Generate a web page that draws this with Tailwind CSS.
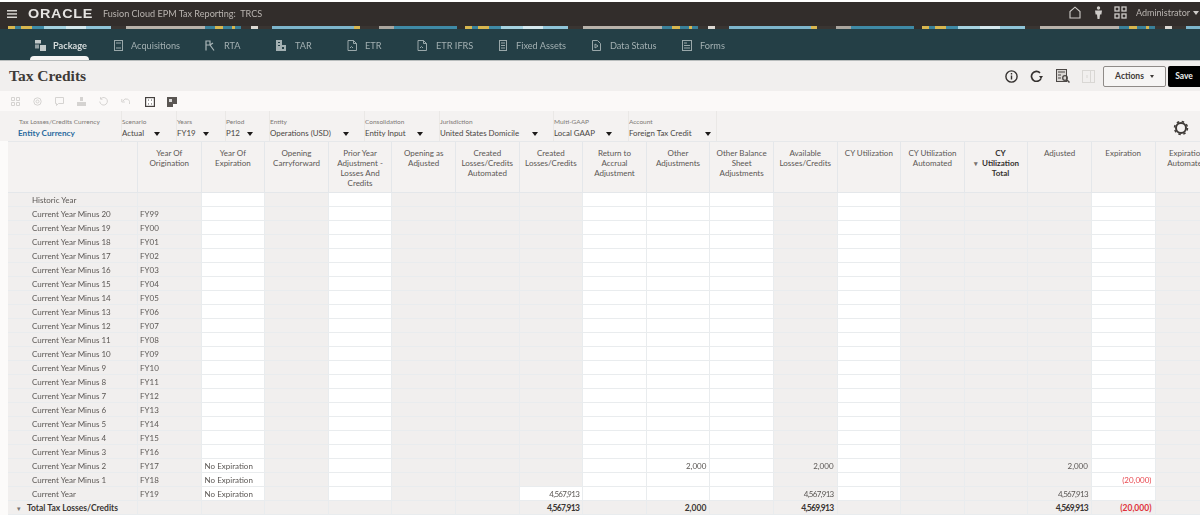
<!DOCTYPE html>
<html lang="en">
<head>
    <meta charset="UTF-8">
    <meta name="viewport" content="width=device-width, initial-scale=1.0">
    <title>Tax Credits</title>
    <script src="https://cdn.jsdelivr.net/npm/@tailwindcss/browser@4"></script>
</head>
<body class="bg-white overflow-hidden">
<div class="w-[1200px] h-[521px] overflow-hidden blur-[0.5px] font-['Lato','Open_Sans',sans-serif] text-[9px] text-[#55504d]">

    <!-- top bar -->
    <div class="h-[2px] bg-white"></div>
    <header class="h-[24px] bg-[#322d2b] flex items-center text-[#b9b4b0]">
        <svg class="ml-[7px] w-[10px] h-[8px]" viewBox="0 0 10 8" fill="#d8d5d2"><rect width="10" height="1.5"/><rect y="3.2" width="10" height="1.5"/><rect y="6.5" width="10" height="1.5"/></svg>
        <span class="ml-[11px] w-[75px] font-['Liberation_Sans',sans-serif] font-bold text-[12px] tracking-[0.6px] text-[#e6e4e2] scale-x-[1.2] origin-left">ORACLE</span>
        <span class="text-[9.1px] w-[960px]">Fusion Cloud EPM Tax Reporting:&nbsp; TRCS</span>
        <div class="absolute left-[1068px] top-[6px] flex items-center">
            <svg class="w-[14px] h-[13px]" viewBox="0 0 14 13" fill="none" stroke="#cfccc9" stroke-width="1.1"><path d="M2 12V5.5L7 1.2l5 4.3V12z"/></svg>
            <svg class="ml-[12px] w-[9px] h-[13px]" viewBox="0 0 9 13" fill="#cfccc9"><circle cx="4.5" cy="2" r="1.7"/><path d="M1 4.5h7l-.6 4H6L5.5 13h-2L3 8.5H1.6z"/></svg>
            <svg class="ml-[11px] w-[13px] h-[13px]" viewBox="0 0 13 13" fill="none" stroke="#cfccc9" stroke-width="1.3"><rect x="1" y="1" width="4" height="4"/><rect x="8" y="1" width="4" height="4"/><rect x="1" y="8" width="4" height="4"/><rect x="8" y="8" width="4" height="4"/></svg>
            <span class="ml-[9px] text-[9px] whitespace-nowrap">Administrator</span>
            <span class="ml-[3px] w-0 h-0 border-x-[3.5px] border-x-transparent border-t-[4px] border-t-[#cfccc9]"></span>
        </div>
    </header>
    <div id="strip" class="h-[3px] flex bg-[#322d2b] overflow-hidden"></div>

    <!-- package tabs -->
    <nav class="h-[31px] bg-[#243f46] flex items-center pl-[35px] pt-[2px] text-[9.2px] text-[#a3b0b2] relative">
        <div class="w-[79px] flex items-center gap-[7px] text-[#d5dbdb] font-bold">
            <svg class="w-[11px] h-[11px]" viewBox="0 0 11 11" fill="#c3caca"><rect width="6" height="3.5"/><rect y="4.5" width="4" height="4" opacity=".7"/><rect x="5" y="5" width="6" height="6"/></svg>
            <span>Package</span>
        </div>
        <div class="w-[91px] flex items-center gap-[8px]">
            <svg class="w-[9px] h-[11px]" viewBox="0 0 9 11" fill="none" stroke="#9aa8aa"><rect x=".5" y=".5" width="8" height="10"/><path d="M2 3h5M2 8h5"/></svg>
            <span>Acquisitions</span>
        </div>
        <div class="w-[71px] flex items-center gap-[9px]">
            <svg class="w-[10px] h-[11px]" viewBox="0 0 10 11" fill="none" stroke="#aab6b8" stroke-width="1.2"><path d="M1 .5v10M1 5h4l4 5.5M1 1h4v4M5 5l3-2"/></svg>
            <span>RTA</span>
        </div>
        <div class="w-[71px] flex items-center gap-[9px]">
            <svg class="w-[10px] h-[11px]" viewBox="0 0 10 11" fill="#a3b0b2"><path d="M0 0h6v5h4v6H0z"/><path d="M2 2h2v1H2zM2 5h2v1H2zM6 7h2v2H6z" fill="#243f46"/></svg>
            <span>TAR</span>
        </div>
        <div class="w-[70px] flex items-center gap-[8px]">
            <svg class="w-[10px] h-[11px]" viewBox="0 0 10 11" fill="none" stroke="#9aa8aa"><path d="M1 .5h5.5l3 3v7h-8.500zM6.500 .5v3h3M3 8l1.500-1.500L6 8"/></svg>
            <span>ETR</span>
        </div>
        <div class="w-[82px] flex items-center gap-[9px]">
            <svg class="w-[10px] h-[11px]" viewBox="0 0 10 11" fill="none" stroke="#9aa8aa"><path d="M1 .5h5.500l3 3v7h-8.500zM6.500 .5v3h3M3 8l1.500-1.500L6 8"/></svg>
            <span>ETR IFRS</span>
        </div>
        <div class="w-[93px] flex items-center gap-[9px]">
            <svg class="w-[8px] h-[11px]" viewBox="0 0 8 11" fill="none" stroke="#9aa8aa"><rect x=".5" y=".5" width="7" height="10"/><path d="M2 3h4M2 5.500h4M2 8h4"/></svg>
            <span>Fixed Assets</span>
        </div>
        <div class="w-[90px] flex items-center gap-[9px]">
            <svg class="w-[9px] h-[11px]" viewBox="0 0 9 11" fill="none" stroke="#9aa8aa"><path d="M.5 .5h5l3 3v7h-8zM3 4v4l3-2z"/></svg>
            <span>Data Status</span>
        </div>
        <div class="flex items-center gap-[8px]">
            <svg class="w-[10px] h-[11px]" viewBox="0 0 10 11" fill="none" stroke="#9aa8aa"><rect x=".5" y=".5" width="9" height="10"/><path d="M2 3h3M2 5.500h6M2 8h6"/></svg>
            <span>Forms</span>
        </div>
        <div class="absolute left-[30px] bottom-0 w-[59px] h-[4px] bg-[#f6f5f4] rounded-t-[4px]"></div>
    </nav>

    <!-- title row -->
    <div class="h-[31px] bg-[#f1efee] border-t border-[#b9bdbd] flex items-center pl-[9px] relative">
        <h1 class="font-['Liberation_Serif',serif] font-bold text-[15.5px] text-[#3e3a37]">Tax Credits</h1>
        <div class="ml-auto flex items-center">
            <svg class="w-[13px] h-[13px]" viewBox="0 0 13 13" fill="none" stroke="#35312f" stroke-width="1.4"><circle cx="6.500" cy="6.500" r="5.600"/><path d="M6.500 5.500v4M6.500 3v1.400"/></svg>
            <svg class="ml-[12px] w-[13px] h-[12px]" viewBox="0 0 13 12" fill="none" stroke="#35312f" stroke-width="1.700"><path d="M11 8.500A5 5 0 1 1 10 2.800"/><path d="M9 6h4l-2 3z" fill="#35312f" stroke="none"/></svg>
            <svg class="ml-[13px] w-[14px] h-[14px]" viewBox="0 0 14 14" fill="none" stroke="#4b4745"><rect x=".5" y=".5" width="10" height="12" fill="#d9d6d3"/><path d="M2 3h7M2 6h3M2 9h3"/><circle cx="9" cy="9" r="2.300" stroke-width="1.300"/><path d="M11 11l2.500 2.500" stroke-width="1.500"/></svg>
            <svg class="ml-[12px] w-[13px] h-[13px]" viewBox="0 0 13 13" fill="none" stroke="#d9d7d4"><rect x=".5" y=".5" width="12" height="12"/><path d="M8.500 .5v12M5 5v3"/></svg>
            <div class="ml-[8px] w-[63px] h-[21px] border border-[#8f8b88] rounded-[2px] bg-[#f6f5f4] flex items-center justify-center gap-[6px] text-[8.500px] font-bold text-[#3e3a37]">
                Actions
                <span class="w-0 h-0 border-x-[2.500px] border-x-transparent border-t-[3px] border-t-[#3e3a37]"></span>
            </div>
            <div class="ml-[2px] w-[32px] h-[21px] bg-black rounded-l-[2px] flex items-center justify-center text-[8.500px] font-bold text-[#eeeeee]">Save</div>
        </div>
    </div>

    <!-- icon toolbar -->
    <div class="h-[20px] bg-[#fbf9f8] flex items-center pl-[11px] pt-px gap-[13px]">
        <svg class="w-[9px] h-[9px]" viewBox="0 0 9 9" fill="none" stroke="#d5d3d1"><path d="M.5 .5h3v3h-3zM5.500 .5h3v3h-3zM.5 5.500h3v3h-3zM5.500 5.500h3v3h-3z"/></svg>
        <svg class="w-[9px] h-[9px]" viewBox="0 0 9 9" fill="none" stroke="#d5d3d1"><circle cx="4.500" cy="4.500" r="3.700"/><circle cx="4.500" cy="4.500" r="1.500"/></svg>
        <svg class="w-[9px] h-[9px]" viewBox="0 0 9 9" fill="none" stroke="#d5d3d1"><path d="M.5 .5h8v6h-5l-2 2v-2h-1z"/></svg>
        <svg class="w-[9px] h-[9px]" viewBox="0 0 9 9" fill="#d5d3d1"><rect x="3" width="3" height="4"/><rect y="5" width="9" height="4"/></svg>
        <svg class="w-[9px] h-[9px]" viewBox="0 0 9 9" fill="none" stroke="#d5d3d1"><path d="M2 1.500A3.800 3.800 0 1 1 .8 4.500M1.500 .2v2h2"/></svg>
        <svg class="w-[9px] h-[9px]" viewBox="0 0 9 9" fill="none" stroke="#d5d3d1"><path d="M8.500 7A3.500 3.500 0 0 0 2 4M.8 2v3h3"/></svg>
        <svg class="ml-[2px] w-[10px] h-[10px]" viewBox="0 0 10 10" fill="#fff" stroke="#45413f" stroke-width="1.200"><rect x=".6" y=".6" width="8.800" height="8.800"/><path d="M3.200 3.200h.5M6.300 3.200h.5M3.200 6.800h.5M6.300 6.800h.5" stroke-width="1.800"/></svg>
        <svg class="ml-[-1px] w-[10px] h-[10px]" viewBox="0 0 10 10" fill="#5a5653"><path d="M0 0h10v7H6v3H0z"/><path d="M2 2h3v3H2z" fill="#ddd"/></svg>
    </div>

    <!-- point of view bar -->
    <div class="h-[30px] bg-[#f4f2f1] flex items-center pl-[18px] relative text-[7.900px] text-[#4a4643] whitespace-nowrap">
        <div class="w-[104px] border-r border-[#eae8e6] h-full pt-[7px]">
            <div class="text-[6.500px] leading-[8px] text-[#7c7875] pl-px">Tax Losses/Credits Currency</div>
            <div class="leading-[14px] font-bold text-[#2a6a9e] text-[8.200px]">Entity Currency</div>
        </div>
        <div class="w-[55px] border-r border-[#eae8e6] h-full pt-[7px]">
            <div class="text-[6.500px] leading-[8px] text-[#7c7875]">Scenario</div>
            <div class="w-[38px] leading-[14px] flex items-center justify-between">Actual<span class="w-0 h-0 border-x-[3.500px] border-x-transparent border-t-[4px] border-t-[#1c1a19] translate-y-px"></span></div>
        </div>
        <div class="w-[49px] border-r border-[#eae8e6] h-full pt-[7px]">
            <div class="text-[6.500px] leading-[8px] text-[#7c7875]">Years</div>
            <div class="w-[32px] leading-[14px] flex items-center justify-between">FY19<span class="w-0 h-0 border-x-[3.500px] border-x-transparent border-t-[4px] border-t-[#1c1a19] translate-y-px"></span></div>
        </div>
        <div class="w-[44px] border-r border-[#eae8e6] h-full pt-[7px]">
            <div class="text-[6.500px] leading-[8px] text-[#7c7875]">Period</div>
            <div class="w-[27px] leading-[14px] flex items-center justify-between">P12<span class="w-0 h-0 border-x-[3.500px] border-x-transparent border-t-[4px] border-t-[#1c1a19] translate-y-px"></span></div>
        </div>
        <div class="w-[95px] border-r border-[#eae8e6] h-full pt-[7px]">
            <div class="text-[6.500px] leading-[8px] text-[#7c7875]">Entity</div>
            <div class="w-[79px] leading-[14px] flex items-center justify-between">Operations (USD)<span class="w-0 h-0 border-x-[3.500px] border-x-transparent border-t-[4px] border-t-[#1c1a19] translate-y-px"></span></div>
        </div>
        <div class="w-[75px] border-r border-[#eae8e6] h-full pt-[7px]">
            <div class="text-[6.500px] leading-[8px] text-[#7c7875]">Consolidation</div>
            <div class="w-[58px] leading-[14px] flex items-center justify-between">Entity Input<span class="w-0 h-0 border-x-[3.500px] border-x-transparent border-t-[4px] border-t-[#1c1a19] translate-y-px"></span></div>
        </div>
        <div class="w-[114px] border-r border-[#eae8e6] h-full pt-[7px]">
            <div class="text-[6.500px] leading-[8px] text-[#7c7875]">Jurisdiction</div>
            <div class="w-[98px] leading-[14px] flex items-center justify-between">United States Domicile<span class="w-0 h-0 border-x-[3.500px] border-x-transparent border-t-[4px] border-t-[#1c1a19] translate-y-px"></span></div>
        </div>
        <div class="w-[75px] border-r border-[#eae8e6] h-full pt-[7px]">
            <div class="text-[6.500px] leading-[8px] text-[#7c7875]">Multi-GAAP</div>
            <div class="w-[58px] leading-[14px] flex items-center justify-between">Local GAAP<span class="w-0 h-0 border-x-[3.500px] border-x-transparent border-t-[4px] border-t-[#1c1a19] translate-y-px"></span></div>
        </div>
        <div class="w-[88px] border-r border-[#eae8e6] h-full pt-[7px]">
            <div class="text-[6.500px] leading-[8px] text-[#7c7875]">Account</div>
            <div class="w-[82px] leading-[14px] flex items-center justify-between">Foreign Tax Credit<span class="w-0 h-0 border-x-[3.500px] border-x-transparent border-t-[4px] border-t-[#1c1a19] translate-y-px"></span></div>
        </div>
        <svg class="ml-auto mr-[11px] translate-y-[2px] w-[16px] h-[16px]" viewBox="0 0 16 16" fill="none" stroke="#3e3a37"><circle cx="8" cy="8" r="5" stroke-width="2"/><circle cx="8" cy="8" r="6.500" stroke-width="1.500" stroke-dasharray="2.500 2.600"/></svg>
    </div>

    <!-- data grid -->
    <div class="pl-[8px] bg-[#fcfbfa] h-[374px]">
        <div id="grid" class="grid grid-cols-[130px_repeat(17,63.6px)] w-[1211px] border-t border-[#e6e8ea]"></div>
    </div>
</div>

<script>
    // decorative strip under the top bar, one period of 457px
    const stripColors = [
        ['#322d2b', 8], ['#d8b64f', 7], ['#3a8099', 6], ['#d8b64f', 11], ['#3f8aa6', 12], ['#a5d2e0', 22], ['#d5e8ee', 20], ['#8fc4d8', 25],
        ['#3a3532', 15], ['#b8b2aa', 79], ['#3a8099', 10], ['#d8b64f', 8], ['#3a8099', 9], ['#d8b64f', 3], ['#3a8099', 6],
        ['#3a3532', 10], ['#dcd8d2', 7], ['#3a3532', 14], ['#7db5cc', 82], ['#d8b64f', 6], ['#3a3532', 19], ['#aaa59e', 15], ['#3f8aa6', 63]
    ];
    const strip = document.getElementById('strip');
    for (let i = 0; i < 3; i++) {
        stripColors.forEach(([color, width]) => {
            const seg = document.createElement('span');
            seg.className = 'shrink-0 h-full';
            seg.style.width = width + 'px';
            seg.style.backgroundColor = color;
            strip.appendChild(seg);
        });
    }

    const headers = ['', 'Year Of Origination', 'Year Of Expiration', 'Opening Carryforward', 'Prior Year Adjustment - Losses And Credits',
        'Opening as Adjusted', 'Created Losses/Credits Automated', 'Created Losses/Credits', 'Return to Accrual Adjustment',
        'Other Adjustments', 'Other Balance Sheet Adjustments', 'Available Losses/Credits', 'CY Utilization', 'CY Utilization Automated',
        'CY Utilization Total', 'Adjusted', 'Expiration', 'Expiration Automated'];
    const whiteCols = [2, 4, 8, 9, 10, 12, 16];

    const rows = [['Historic Year', '']];
    const years = ['FY99', 'FY00', 'FY01', 'FY02', 'FY03', 'FY04', 'FY05', 'FY06', 'FY07', 'FY08', 'FY09', 'FY10', 'FY11', 'FY12', 'FY13', 'FY14', 'FY15', 'FY16', 'FY17', 'FY18'];
    years.forEach((y, i) => rows.push(['Current Year Minus ' + (20 - i), y]));
    rows.push(['Current Year', 'FY19']);

    // row index -> column index -> value
    const values = {
        19: { 2: 'No Expiration', 9: '2,000', 11: '2,000', 15: '2,000' },
        20: { 2: 'No Expiration', 16: '(20,000)' },
        21: { 2: 'No Expiration', 7: '4,567,913', 11: '4,567,913', 15: '4,567,913' }
    };
    const totals = { 7: '4,567,913', 9: '2,000', 11: '4,569,913', 15: '4,569,913', 16: '(20,000)' };

    const grid = document.getElementById('grid');

    function addCell(className, text) {
        const cell = document.createElement('div');
        cell.className = className;
        cell.textContent = text;
        grid.appendChild(cell);
        return cell;
    }

    headers.forEach((h, c) => {
        const bold = c === 14;
        const cell = addCell('h-[51px] bg-[#f4f2f1] border-r border-b border-[#e4e7ea] text-center text-[8px] leading-[10px] pt-[6px] px-[5px] relative ' + (bold ? 'font-bold text-[#35312f] pl-[14px]' : 'text-[#5b5754]'), h);
        if (bold) {
            const mark = document.createElement('span');
            mark.className = 'absolute left-[9px] top-[16px] text-[7px] text-[#777370]';
            mark.textContent = '\u25BE';
            cell.appendChild(mark);
        }
    });

    rows.forEach((row, r) => {
        headers.forEach((_, c) => {
            let text = '';
            if (c < 2) text = row[c];
            else if (values[r] && values[r][c]) text = values[r][c];
            const white = whiteCols.includes(c) || (r === 21 && c === 7);
            const red = text.startsWith('(');
            const align = c === 0 ? 'pl-[24px]' : c === 1 ? 'pl-[2px]' : c === 2 ? 'pl-[3px]' : 'text-right pr-[3px]';
            const tight = text.length === 9 && c > 2 ? 'tracking-[-0.7px]' : '';
            addCell('h-[14px] border-r border-b border-[#e9ecee] text-[8px] leading-[14px] whitespace-nowrap overflow-hidden ' + align + ' ' + tight + ' ' + (white ? 'bg-white' : 'bg-[#f1efee]') + ' ' + (red ? 'text-[#e8484f]' : 'text-[#5b5754]'), text);
        });
    });

    headers.forEach((_, c) => {
        const text = c === 0 ? 'Total Tax Losses/Credits' : (totals[c] || '');
        const tight = text.length === 9 ? 'tracking-[-0.7px]' : '';
        const cell = addCell('h-[14px] border-r border-b border-[#e9ecee] bg-[#f1efee] font-bold text-[8.500px] leading-[14px] whitespace-nowrap relative ' + tight + ' ' + (c === 0 ? 'pl-[19px]' : 'text-right pr-[3px]') + ' ' + (c === 16 ? 'text-[#e0323a]' : 'text-[#3a3633]'), text);
        if (c === 0) {
            const mark = document.createElement('span');
            mark.className = 'absolute left-[9px] top-0 text-[7px] font-normal text-[#777370]';
            mark.textContent = '\u25BE';
            cell.appendChild(mark);
        }
    });
</script>
</body>
</html>
